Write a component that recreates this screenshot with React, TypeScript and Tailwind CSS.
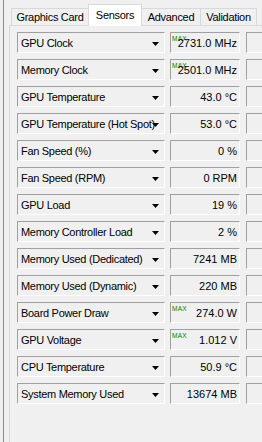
import React from "react";

type Row = { label: string; value: string; max?: boolean };

const rows: Row[] = [
  { label: "GPU Clock", value: "2731.0 MHz", max: true },
  { label: "Memory Clock", value: "2501.0 MHz", max: true },
  { label: "GPU Temperature", value: "43.0 °C" },
  { label: "GPU Temperature (Hot Spot)", value: "53.0 °C" },
  { label: "Fan Speed (%)", value: "0 %" },
  { label: "Fan Speed (RPM)", value: "0 RPM" },
  { label: "GPU Load", value: "19 %" },
  { label: "Memory Controller Load", value: "2 %" },
  { label: "Memory Used (Dedicated)", value: "7241 MB" },
  { label: "Memory Used (Dynamic)", value: "220 MB" },
  { label: "Board Power Draw", value: "274.0 W", max: true },
  { label: "GPU Voltage", value: "1.012 V", max: true },
  { label: "CPU Temperature", value: "50.9 °C" },
  { label: "System Memory Used", value: "13674 MB" },
];

function Arrow() {
  return (
    <svg
      className="absolute left-[134px] top-[9px]"
      width="7"
      height="4"
      viewBox="0 0 7 4"
    >
      <path d="M0 0H7L3.5 4Z" fill="#000" />
    </svg>
  );
}

function SensorRow({ row }: { row: Row }) {
  return (
    <div className="flex h-[21px] shrink-0">
      <div className="relative w-[148px] h-[21px] shrink-0 border border-t-[#a0a0a0] border-l-[#a0a0a0] border-b-white border-r-white">
        <div className="absolute left-[3px] top-[1px] whitespace-nowrap text-[11px] leading-[18px] tracking-[-0.3px] text-black">
          {row.label}
        </div>
        <Arrow />
      </div>
      <div className="relative ml-[5px] w-[70px] h-[21px] shrink-0 border border-t-[#a0a0a0] border-l-[#a0a0a0] border-b-white border-r-white">
        {row.max && (
          <div className="absolute left-[1px] top-[2px] text-[6.5px] leading-[8px] tracking-[0.3px] text-[#008000]">
            MAX
          </div>
        )}
        <div className="absolute right-[2px] top-[1px] whitespace-nowrap text-[11px] leading-[18px] text-black">
          {row.value}
        </div>
      </div>
      <div className="ml-[6px] w-[40px] h-[21px] shrink-0 border border-t-[#a0a0a0] border-l-[#a0a0a0] border-b-white border-r-white" />
    </div>
  );
}

export default function App() {
  return (
    <div className="flex w-[262px] h-[442px] overflow-hidden bg-[#f0f0f0] font-['Liberation_Sans',Arial,sans-serif]">
      <div className="w-[3px] shrink-0" />
      <div className="w-[1px] shrink-0 bg-[#8a8a8a]" />
      <div className="w-[5px] shrink-0" />
      <div className="flex flex-col flex-1 min-w-0">
        <div className="relative z-10 flex items-end h-[25px] pl-[2px] shrink-0 text-[11px] tracking-[-0.3px] text-black">
          <div className="flex items-center justify-center w-[77px] h-[17px] border-l border-t border-[#d9d9d9]">
            Graphics Card
          </div>
          <div className="flex items-start justify-center pt-[2px] w-[54px] h-[22px] -mb-[1px] border-l border-t border-r border-[#d9d9d9] bg-white">
            Sensors
          </div>
          <div className="flex items-center justify-center w-[59px] h-[17px] border-t border-r border-[#d9d9d9]">
            Advanced
          </div>
          <div className="flex items-center justify-center w-[56px] h-[17px] border-t border-r border-[#d9d9d9]">
            Validation
          </div>
        </div>
        <div className="flex flex-col flex-1 gap-[6px] pt-[6px] pl-[7px] border-l border-t border-[#d9d9d9]">
          {rows.map((r) => (
            <SensorRow key={r.label} row={r} />
          ))}
        </div>
      </div>
    </div>
  );
}
